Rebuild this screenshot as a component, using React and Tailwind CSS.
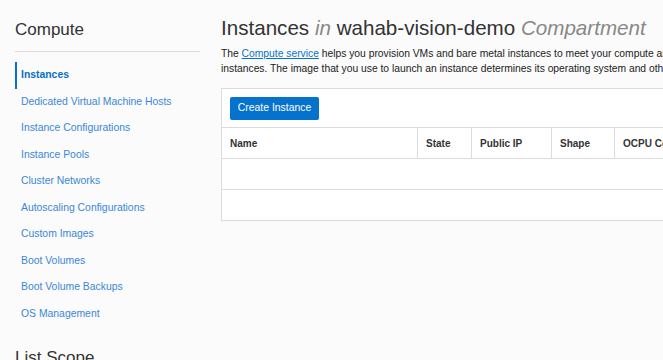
import React from "react";

const items = [
  "Instances",
  "Dedicated Virtual Machine Hosts",
  "Instance Configurations",
  "Instance Pools",
  "Cluster Networks",
  "Autoscaling Configurations",
  "Custom Images",
  "Boot Volumes",
  "Boot Volume Backups",
  "OS Management",
];

export default function App() {
  return (
    <div
      className="w-[663px] h-[360px] overflow-hidden bg-[#fbfbfb] flex"
      style={{ fontFamily: '"Liberation Sans", Arial, sans-serif' }}
    >
      <aside className="w-[221px] shrink-0 pl-[15px] pr-[21px] pt-[20px]">
        <h2 className="text-[17px] leading-[20px] text-[#333]">Compute</h2>
        <div className="mt-[11px] h-px bg-[#dcdcdc]" />
        <nav className="mt-[10px] flex flex-col">
          {items.map((it, i) =>
            i === 0 ? (
              <div
                key={it}
                className="h-[26.5px] flex items-center border-l-2 border-[#0572ce] pl-[4px] text-[10.4px] font-bold text-[#0a6fc7]"
              >
                {it}
              </div>
            ) : (
              <div
                key={it}
                className="h-[26.5px] flex items-center pl-[6px] text-[10.4px] text-[#3a87d8]"
              >
                {it}
              </div>
            )
          )}
        </nav>
        <h2 className="mt-[21px] text-[17px] leading-[20px] text-[#333]">List Scope</h2>
      </aside>
      <main className="w-[700px] shrink-0 pt-[16px]">
        <h1 className="text-[20.6px] leading-[24px] text-[#333] whitespace-nowrap">
          Instances <em className="text-[#888]">in</em> wahab-vision-demo{" "}
          <em className="text-[#888]">Compartment</em>
        </h1>
        <p className="mt-[6px] text-[10.3px] leading-[15px] text-[#222] whitespace-nowrap">
          The <a className="text-[#0572ce] underline">Compute service</a> helps you provision VMs and bare metal instances to meet your compute and application requirements.
          <br />
          instances. The image that you use to launch an instance determines its operating system and other software.
        </p>
        <div className="mt-[12px] border border-[#dcdcdc] bg-white">
          <div className="h-[38px] flex items-center pl-[8px]">
            <button className="h-[23px] w-[89px] rounded-[2px] bg-[#0572ce] text-white text-[10.4px]">
              Create Instance
            </button>
          </div>
          <div className="flex h-[32px] border-t border-b border-[#dcdcdc] text-[10px] font-bold text-[#333]">
            <div className="w-[196px] flex items-center pl-[8px] border-r border-[#dcdcdc]">Name</div>
            <div className="w-[54px] flex items-center pl-[8px] border-r border-[#dcdcdc]">State</div>
            <div className="w-[80px] flex items-center pl-[8px] border-r border-[#dcdcdc]">Public IP</div>
            <div className="w-[63px] flex items-center pl-[8px] border-r border-[#dcdcdc]">Shape</div>
            <div className="flex-1 flex items-center pl-[8px]">OCPU Count</div>
          </div>
          <div className="h-[31px] border-b border-[#dcdcdc]" />
          <div className="h-[30px]" />
        </div>
      </main>
    </div>
  );
}
